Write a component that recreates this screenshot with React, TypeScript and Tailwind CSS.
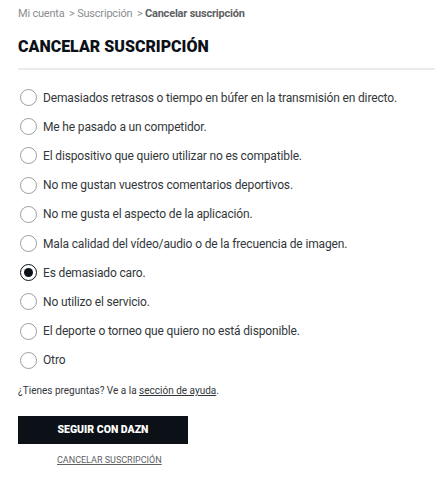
import React, { useState } from "react";

const reasons = [
  "Demasiados retrasos o tiempo en búfer en la transmisión en directo.",
  "Me he pasado a un competidor.",
  "El dispositivo que quiero utilizar no es compatible.",
  "No me gustan vuestros comentarios deportivos.",
  "No me gusta el aspecto de la aplicación.",
  "Mala calidad del vídeo/audio o de la frecuencia de imagen.",
  "Es demasiado caro.",
  "No utilizo el servicio.",
  "El deporte o torneo que quiero no está disponible.",
  "Otro",
];

export default function App() {
  const [sel, setSel] = useState(6);
  return (
    <div
      className="w-[435px] h-[480px] bg-white pl-[18px] text-[#2b2f33] overflow-hidden"
      style={{ fontFamily: '"Roboto", sans-serif' }}
    >
      <div className="pt-[6px] h-[22px] text-[11px] tracking-[-0.2px] text-[#8a8d90] leading-[16px] whitespace-nowrap">
        Mi cuenta <span className="ml-[2px]">&gt; Suscripción</span>{" "}
        <span className="ml-[2px]">&gt;</span>{" "}
        <span className="font-bold text-[#5e6165]">Cancelar suscripción</span>
      </div>
      <h1 className="mt-[14px] text-[16px] leading-[22px] font-black text-[#0c1117]">
        CANCELAR SUSCRIPCIÓN
      </h1>
      <div className="mt-[10px] h-[2px] bg-[#ebebeb]" />
      <div className="mt-[13px] flex flex-col">
        {reasons.map((r, i) => (
          <label
            key={i}
            className="flex items-center h-[29.2px] cursor-pointer"
            onClick={() => setSel(i)}
          >
            <span
              className={
                "w-[17px] h-[17px] rounded-full flex items-center justify-center ml-[2px] " +
                (sel === i ? "border-[1.5px] border-[#0c1117]" : "border border-[#9a9da0]")
              }
            >
              {sel === i && <span className="w-[9px] h-[9px] rounded-full bg-[#0c1117]" />}
            </span>
            <span className="ml-[6px] text-[12px] tracking-[-0.15px] text-[#33373b] whitespace-nowrap">{r}</span>
          </label>
        ))}
      </div>
      <div className="mt-[9px] text-[10px] leading-[14px] text-[#33373b]">
        ¿Tienes preguntas? Ve a la{" "}
        <a className="underline">sección de ayuda</a>.
      </div>
      <button className="mt-[18px] w-[170px] h-[28px] bg-[#0c1117] text-white text-[10.5px] font-black flex items-center justify-center">
        SEGUIR CON DAZN
      </button>
      <div className="pl-[39px] mt-[10px] text-[9px] text-[#5e6165] underline whitespace-nowrap">
        CANCELAR SUSCRIPCIÓN
      </div>
    </div>
  );
}
